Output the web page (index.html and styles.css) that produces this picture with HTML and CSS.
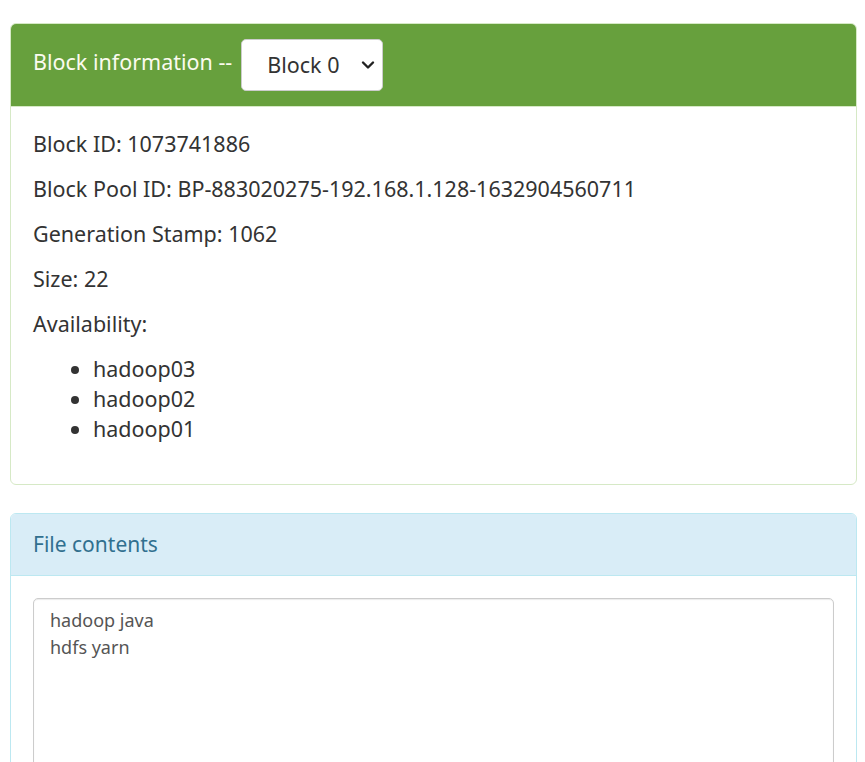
FILE: index.html
```html
<!DOCTYPE html>
<html>
<head>
<meta charset="utf-8">
<link rel="stylesheet" href="styles.css">
</head>
<body>
<div class="page">
  <div class="panel panel-success">
    <div class="panel-heading">
      <span class="title">Block information --</span>
      <div class="select">
        <span>Block 0</span>
        <svg class="chev" width="14" height="10" viewBox="0 0 14 10"><path d="M2 2.5 L7 7.5 L12 2.5" fill="none" stroke="#222" stroke-width="2.4" stroke-linecap="round" stroke-linejoin="round"/></svg>
      </div>
    </div>
    <div class="panel-body">
      <p>Block ID: 1073741886</p>
      <p>Block Pool ID: BP-883020275-192.168.1.128-1632904560711</p>
      <p>Generation Stamp: 1062</p>
      <p>Size: 22</p>
      <p>Availability:</p>
      <ul>
        <li>hadoop03</li>
        <li>hadoop02</li>
        <li>hadoop01</li>
      </ul>
    </div>
  </div>
  <div class="panel panel-info">
    <div class="panel-heading info-heading">
      <span class="info-title">File contents</span>
    </div>
    <div class="panel-body info-body">
      <div class="textarea">hadoop java<br>hdfs yarn</div>
    </div>
  </div>
</div>
</body>
</html>
```
FILE: styles.css
```css
html, body {
  margin: 0;
  padding: 0;
  background: #fff;
}
body {
  font-family: "Noto Sans", "Open Sans", sans-serif;
  color: #333;
  font-size: 21.5px;
  line-height: 30px;
}
.page {
  padding: 23px 8px 0 10px;
}
.panel {
  border: 1px solid #d6e9c6;
  border-radius: 6px;
  margin-bottom: 28px;
  overflow: hidden;
}
.panel-success .panel-heading {
  background: #67a03d;
  color: #fbfbef;
  height: 82px;
  padding: 0 22px;
  display: flex;
  align-items: center;
  gap: 9px;
  border-bottom: 1px solid #d6e9c6;
}
.title {
  font-size: 21.5px;
  margin-top: -6px;
}
.select {
  width: 142px;
  height: 52px;
  box-sizing: border-box;
  background: #fff;
  border: 1px solid #ccc;
  border-radius: 5px;
  color: #333;
  display: flex;
  align-items: center;
  justify-content: space-between;
  padding: 0 7px 0 25px;
  font-size: 21.5px;
}
.panel-body {
  padding: 22px 22px 40px 22px;
}
.panel-body p {
  margin: 0 0 15px 0;
}
.panel-body ul {
  margin: 0;
  padding-left: 60px;
}
.panel-info {
  border-color: #bce8f1;
}
.info-heading {
  background: #d9edf7;
  color: #31708f;
  height: 61px;
  padding: 0 22px;
  display: flex;
  align-items: center;
  border-bottom: 1px solid #bce8f1;
}
.info-title {
  font-size: 21px;
  margin-top: -2px;
}
.info-body {
  padding: 22px 22px 0 22px;
}
.textarea {
  height: 300px;
  border: 1px solid #ccc;
  border-radius: 5px;
  box-shadow: inset 0 1px 1px rgba(0,0,0,0.08);
  padding: 8px 16px;
  font-size: 18px;
  line-height: 27px;
  color: #555;
}
```
